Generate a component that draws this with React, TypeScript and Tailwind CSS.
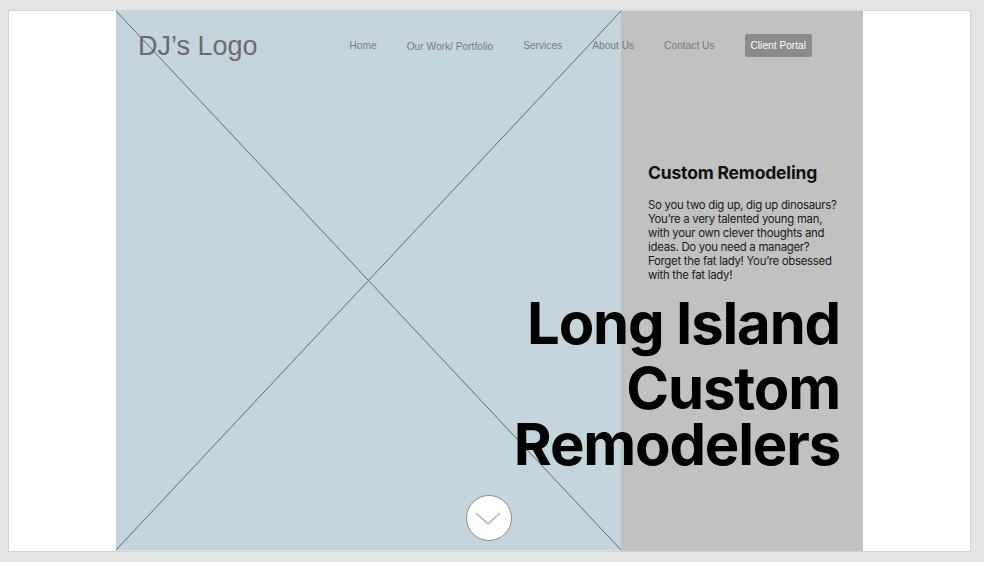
import React from "react";

export default function App() {
  const sans = { fontFamily: '"Liberation Sans", Arial, sans-serif' };
  const inter = { fontFamily: 'Inter, "Noto Sans", sans-serif' };
  return (
    <div className="w-[984px] h-[562px] bg-[#e4e4e4] pt-[10px] pl-[8px] overflow-hidden">
      <div className="w-[963px] h-[542px] bg-white border border-[#d3d3d3]">
        <div className="relative ml-[107px] flex h-[540px] w-[747px]">
          <div className="relative w-[505px] h-full bg-[#c5d5dd] border-b border-[#d8e2e8]">
            <svg className="absolute inset-0" width="505" height="539" viewBox="0 0 505 539">
              <line x1="0" y1="0" x2="505" y2="539" stroke="#5a5f62" strokeWidth="0.9" />
              <line x1="505" y1="0" x2="0" y2="539" stroke="#5a5f62" strokeWidth="0.9" />
            </svg>
          </div>
          <div className="w-[242px] h-full bg-[#c1c1c1]" />

          <div className="absolute inset-0 flex flex-col">
            <div className="flex items-center h-[23px] mt-[23px] pl-[22px] pr-[51px]">
              <div className="text-[27px] text-[#6c6c6c] leading-[32px]" style={sans}>
                DJ’s Logo
              </div>
              <nav className="ml-auto flex items-center gap-[30px] text-[10.2px] text-[#7a7a7a]" style={sans}>
                <span>Home</span>
                <span className="mt-[2px]">Our Work/ Portfolio</span>
                <span>Services</span>
                <span className="mt-[1px]">About Us</span>
                <span>Contact Us</span>
                <span className="h-[23px] px-[6px] flex items-center bg-[#8b8b8b] text-white rounded-[2px]">
                  Client Portal
                </span>
              </nav>
            </div>

            <div className="flex flex-col items-end pr-[23px] mt-[105px]" style={inter}>
              <div className="w-[192px]">
                <h2 className="text-[17.5px] leading-[22px] font-bold text-[#111] tracking-[-0.01em]">
                  Custom Remodeling
                </h2>
                <p className="mt-[14px] text-[11.4px] leading-[14px] text-[#1a1a1a] tracking-[-0.025em]">
                  So you two dig up, dig up dinosaurs? You’re a very talented young man, with your own clever thoughts and ideas. Do you need a manager? Forget the fat lady! You’re obsessed with the fat lady!
                </p>
              </div>
              <div className="mt-[12px] text-right font-bold text-black text-[58px] leading-[58px] tracking-[-0.02em]">
                Long Island
              </div>
              <div className="mt-[8px] text-right font-bold text-black text-[58px] leading-[56px] tracking-[-0.02em]">
                Custom
                <br />
                Remodelers
              </div>
            </div>
          </div>

          <div className="absolute left-[350px] bottom-[10px] w-[46px] h-[46px] rounded-full bg-white border border-[#8a8a8a] flex items-center justify-center">
            <svg width="28" height="16" viewBox="0 0 28 16">
              <polyline points="1,3 13,14 25,3" fill="none" stroke="#b4b4b4" strokeWidth="1.5" />
            </svg>
          </div>
        </div>
      </div>
    </div>
  );
}
